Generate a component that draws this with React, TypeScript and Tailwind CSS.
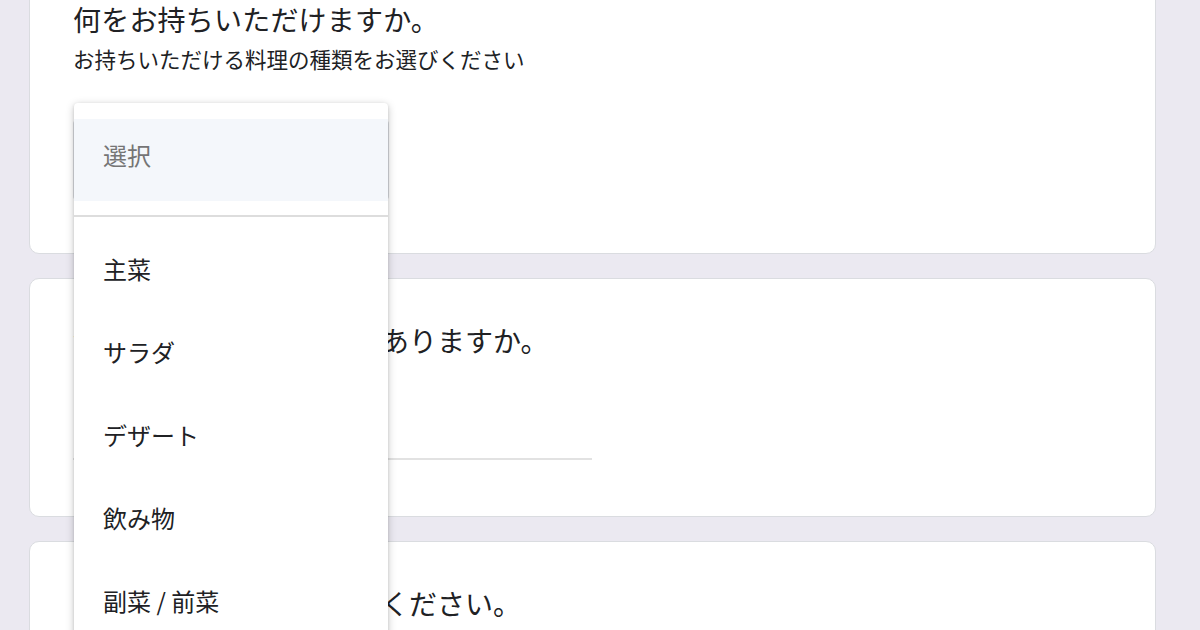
import React from "react";

const font = { fontFamily: '"Noto Sans CJK JP", "Noto Sans", sans-serif' };

export default function App() {
  const items = ["主菜", "サラダ", "デザート", "飲み物", "副菜 / 前菜"];
  return (
    <div
      className="relative w-[1200px] h-[630px] overflow-hidden bg-[#ebe9f1] text-[#202124]"
      style={font}
    >
      <div className="flex flex-col gap-[24px] ml-[29px] w-[1127px] mt-[-43px]">
        {/* Card 1 */}
        <div className="bg-white border border-[#dadce0] rounded-[10px] pl-[43px] pr-[43px] pt-[41px] pb-[53px]">
          <div className="text-[28px] leading-[40px] tracking-[0.2px]">何をお持ちいただけますか。</div>
          <div className="mt-[5px] text-[21.5px] leading-[30px]">
            お持ちいただける料理の種類をお選びください
          </div>
          <div className="mt-[46px] h-[80px] w-[316px] border-2 border-[#dadce0] rounded-[4px]" />
        </div>
        {/* Card 2 */}
        <div className="bg-white border border-[#dadce0] rounded-[10px] pl-[43px] pr-[43px] pt-[41px] pb-[56px]">
          <div className="text-[28px] leading-[40px]">食物アレルギーや制限はありますか。</div>
          <div className="mt-[50px] h-[50px] w-[519px] border-b-2 border-[#e2e2e2] flex items-center text-[22px] text-[#9aa0a6]">
            回答を入力
          </div>
        </div>
        {/* Card 3 */}
        <div className="bg-white border border-[#dadce0] rounded-[10px] pl-[43px] pr-[43px] pt-[41px] pb-[60px]">
          <div className="text-[28px] leading-[40px]">お名前と連絡先をご記入ください。</div>
        </div>
      </div>

      {/* Dropdown menu */}
      <div className="absolute left-[74px] top-[103px] w-[314px] h-[540px] bg-white rounded-[4px] shadow-[0_2px_8px_rgba(0,0,0,0.22),0_1px_3px_rgba(0,0,0,0.12)] pt-[16px]">
        <div className="h-[82px] bg-[#f4f7fb] flex items-center pl-[29px] pb-[10px] text-[24px] text-[#757575]">
          選択
        </div>
        <div className="mt-[14px] h-[2px] bg-[#dddddd]" />
        <div className="mt-[12px] flex flex-col">
          {items.map((t) => (
            <div key={t} className="h-[83px] flex items-center pl-[29px] pb-[4px] text-[24px] text-[#202124]">
              {t}
            </div>
          ))}
        </div>
      </div>
    </div>
  );
}
